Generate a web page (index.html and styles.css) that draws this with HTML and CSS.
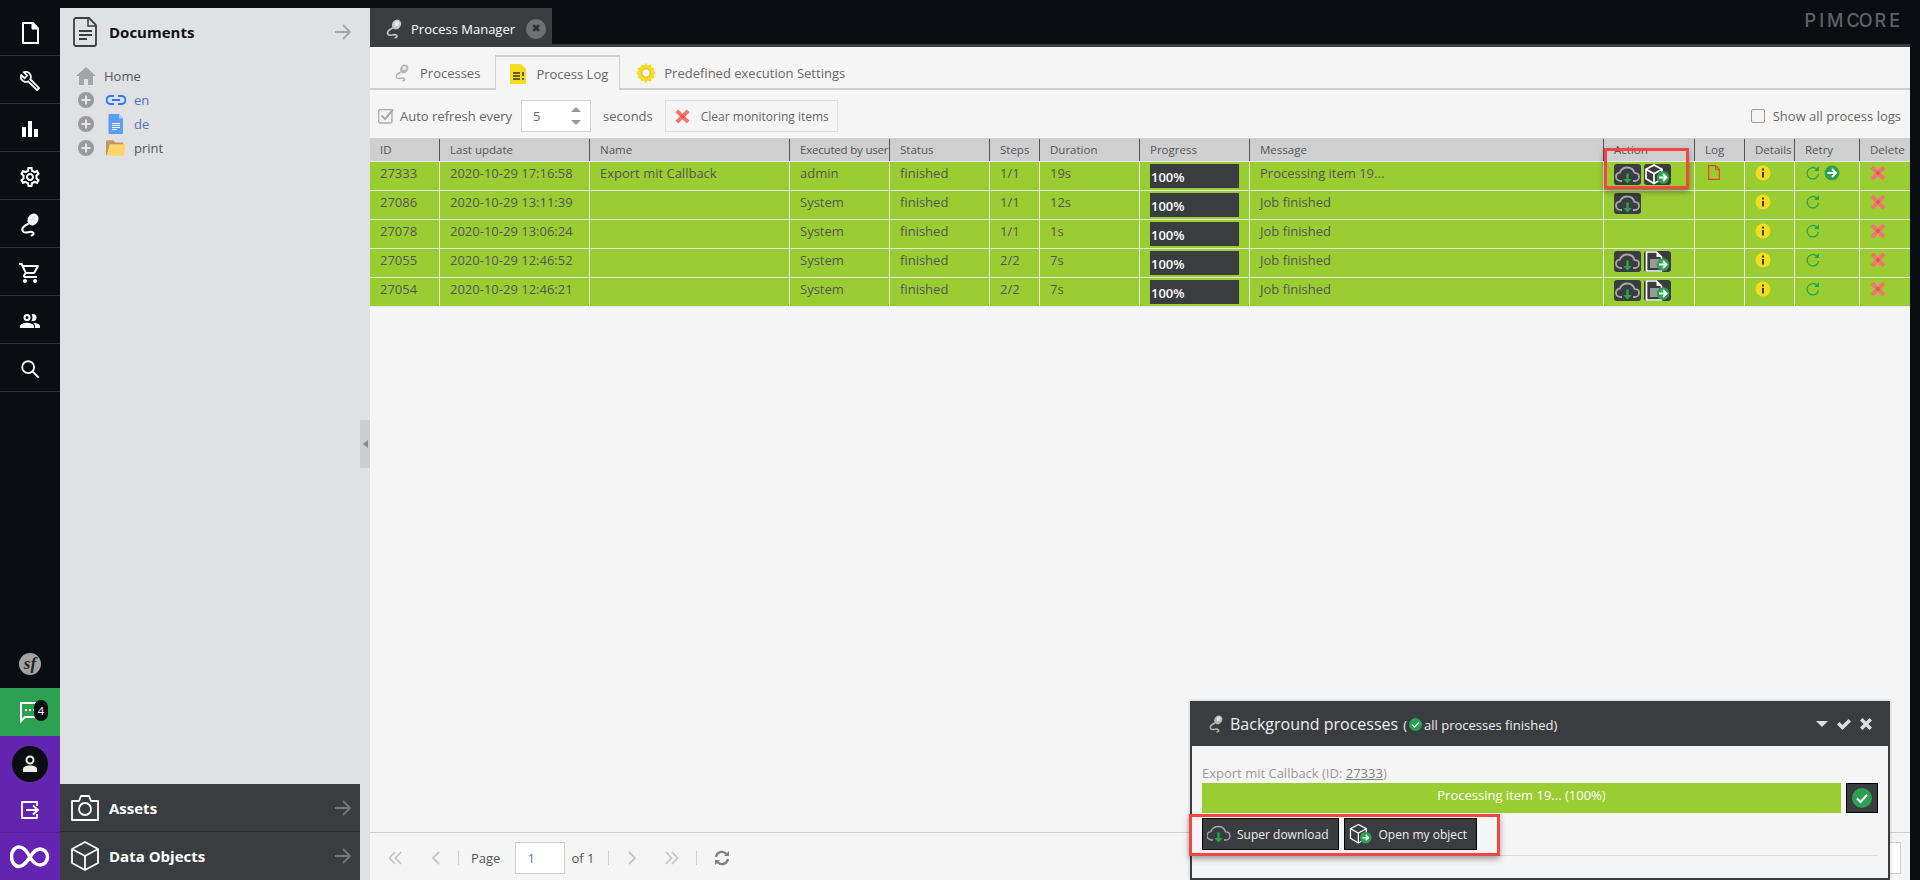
FILE: index.html
```html
<!DOCTYPE html>
<html lang="en">
<head>
    <meta charset="UTF-8">
    <title>Process Manager - Pimcore</title>
    <link rel="stylesheet" href="styles.css">
</head>
<body>
    <!-- shared icons -->
    <svg class="defs" xmlns="http://www.w3.org/2000/svg">
        <symbol id="i-pm" viewBox="0 0 24 24">
            <path d="M10 11C5.500 13 3 15.500 5 18.500c2 2.500 6.500-.5 9 .5 2.500 1 2 3-.5 3.500" fill="none" stroke="currentColor" stroke-width="2" stroke-linecap="round"/>
            <ellipse cx="15" cy="6.500" rx="5.200" ry="6.200" transform="rotate(35 15 6.500)" fill="currentColor"/>
            <ellipse cx="15.500" cy="5.500" rx="2.500" ry="3" transform="rotate(35 15.500 5.500)" fill="#d8eef9"/>
        </symbol>
        <symbol id="i-arrow" viewBox="0 0 16 16">
            <path d="M0 8h15M8 1l7 7-7 7" fill="none" stroke="currentColor" stroke-width="1.800"/>
        </symbol>
        <symbol id="i-plus" viewBox="0 0 16 16">
            <circle cx="8" cy="8" r="8" fill="#999"/>
            <path d="M8 3.500v9M3.500 8h9" stroke="#e8e8e8" stroke-width="2"/>
        </symbol>
        <symbol id="i-cloud" viewBox="0 0 27 21">
            <rect width="27" height="21" rx="3" fill="#3a3d40"/>
            <path d="M8 17H7c-2.800 0-5-1.800-5-4.300 0-2.200 1.700-3.800 3.900-4.100C7 5.500 10 3.500 13.200 3.500c3.800 0 6.500 2.400 7.300 5.400 2.600.1 4.500 1.700 4.500 4 0 2.300-1.900 4.100-4.300 4.100H19" fill="none" stroke="#a9a9a9" stroke-width="1.800"/>
            <path d="M12.300 9.500h2.400V15h3l-4.200 4.500L9.300 15h3z" fill="#2ca152"/>
        </symbol>
        <symbol id="i-cube-go" viewBox="0 0 27 21">
            <rect width="27" height="21" rx="3" fill="#3a3d40"/>
            <path d="M10 1l8 4.300v9.400L10 19.500l-8-4.800V5.300zM2 5.300l8 4.400 8-4.400M10 9.700v9.800" fill="none" stroke="#fff" stroke-width="1.700"/>
            <circle cx="19" cy="13.500" r="6.300" fill="#2ca152"/>
            <path d="M15 13.500h7M19 10l3.500 3.500-3.500 3.500" fill="none" stroke="#fff" stroke-width="1.800"/>
        </symbol>
        <symbol id="i-doc-go" viewBox="0 0 27 21">
            <rect width="27" height="21" rx="3" fill="#3a3d40"/>
            <path d="M2.500 1h10l5 5v14h-15z" fill="none" stroke="#fff" stroke-width="1.700"/>
            <path d="M12.500 1v5h5" fill="#fff"/>
            <rect x="6" y="8" width="9" height="9" fill="#999"/>
            <circle cx="19" cy="13.500" r="6.300" fill="#2ca152"/>
            <path d="M15 13.500h7M19 10l3.500 3.500-3.500 3.500" fill="none" stroke="#fff" stroke-width="1.800"/>
        </symbol>
        <symbol id="i-info" viewBox="0 0 16 16">
            <circle cx="8" cy="8" r="7.500" fill="#f5dc1e"/>
            <path d="M8 3.500v2M8 7v5.500" stroke="#3a3d40" stroke-width="2"/>
        </symbol>
        <symbol id="i-retry" viewBox="0 0 16 16">
            <path d="M13.500 9a5.700 5.700 0 1 1-1.800-5" fill="none" stroke="#2ca152" stroke-width="1.300"/>
            <path d="M14 1v5H9z" fill="#2ca152"/>
        </symbol>
        <symbol id="i-go" viewBox="0 0 16 16">
            <circle cx="8" cy="8" r="7.500" fill="#2ca152"/>
            <path d="M3.500 8h8.500M8 4l4 4-4 4" fill="none" stroke="#fff" stroke-width="1.800"/>
        </symbol>
        <symbol id="i-delete" viewBox="0 0 16 16">
            <path d="M.5 3.500L3.500.5 8 5l4.500-4.500 3 3L11 8l4.500 4.500-3 3L8 11l-4.500 4.500-3-3L5 8z" fill="#f57373"/>
            <circle cx="8" cy="8" r="2" fill="#e4574a"/>
        </symbol>
        <symbol id="i-check-round" viewBox="0 0 20 20">
            <circle cx="10" cy="10" r="10" fill="#2ca152"/>
            <path d="M5 10.500l3.500 3.500L15 7" fill="none" stroke="#fff" stroke-width="2"/>
        </symbol>
    </svg>

    <nav class="rail">
        <a class="rail-item">
            <svg class="rail-icon" viewBox="0 0 24 24"><path d="M5 2h10l5 5.500V22H5z" fill="none" stroke="#fff" stroke-width="2" stroke-linejoin="round"/><path d="M14 2v6h6" fill="#fff" stroke="#fff"/></svg>
        </a>
        <a class="rail-item">
            <svg class="rail-icon rail-icon-sm" viewBox="0 0 24 24"><path fill="#fff" d="M22.610 18.990l-9.080-9.080c.93-2.340.45-5.100-1.440-7C9.790.61 6.210.4 3.660 2.260L7.500 6.110 6.080 7.520 2.250 3.690C.39 6.230.6 9.820 2.900 12.110c1.860 1.860 4.570 2.360 6.890 1.480l9.110 9.110c.39.39 1.020.39 1.410 0l2.300-2.300c.4-.38.4-1.010 0-1.410zm-3 1.600l-9.460-9.460c-.61.45-1.290.72-2 .82-1.360.2-2.790-.21-3.830-1.250C3.370 9.760 2.930 8.500 3 7.260l3.090 3.090 4.240-4.240-3.090-3.090c1.240-.07 2.490.37 3.440 1.310 1.080 1.080 1.490 2.570 1.240 3.960-.12.71-.42 1.370-.88 1.960l9.450 9.450-.88.89z"/></svg>
        </a>
        <a class="rail-item">
            <svg class="rail-icon" viewBox="0 0 24 24"><path fill="#fff" d="M4 10h4v10H4zM10 4h4v16h-4zM16 12h4v8h-4z"/></svg>
        </a>
        <a class="rail-item">
            <svg class="rail-icon" viewBox="0 0 24 24"><path fill="#fff" d="M19.430 12.980c.04-.32.07-.64.07-.98 0-.34-.03-.66-.07-.98l2.110-1.650c.19-.15.24-.42.12-.64l-2-3.460c-.09-.16-.26-.25-.44-.25-.06 0-.12.01-.17.03l-2.490 1c-.52-.4-1.080-.73-1.690-.98l-.38-2.650C14.460 2.180 14.250 2 14 2h-4c-.25 0-.46.18-.49.42l-.38 2.650c-.61.25-1.170.59-1.690.98l-2.490-1c-.06-.02-.12-.03-.18-.03-.17 0-.34.09-.43.25l-2 3.460c-.13.22-.07.49.12.64l2.110 1.650c-.04.32-.07.65-.07.98 0 .33.03.66.07.98l-2.110 1.650c-.19.15-.24.42-.12.64l2 3.460c.09.16.26.25.44.25.06 0 .12-.01.17-.03l2.490-1c.52.4 1.080.73 1.690.98l.38 2.650c.03.24.24.42.49.42h4c.25 0 .46-.18.49-.42l.38-2.650c.61-.25 1.170-.59 1.690-.98l2.490 1c.06.02.12.03.18.03.17 0 .34-.09.43-.25l2-3.460c.12-.22.07-.49-.12-.64l-2.110-1.650zm-1.980-1.710c.04.31.05.52.05.73 0 .21-.02.43-.05.73l-.14 1.130.89.7 1.080.84-.7 1.210-1.270-.51-1.040-.42-.9.68c-.43.32-.84.56-1.250.73l-1.060.43-.16 1.130-.2 1.350h-1.400l-.19-1.350-.16-1.130-1.060-.43c-.43-.18-.83-.41-1.230-.71l-.91-.7-1.060.43-1.270.51-.7-1.210 1.080-.84.89-.7-.14-1.130c-.03-.31-.05-.54-.05-.74s.02-.43.05-.73l.14-1.130-.89-.7-1.080-.84.7-1.210 1.270.51 1.040.42.9-.68c.43-.32.84-.56 1.250-.73l1.060-.43.16-1.130.2-1.350h1.390l.19 1.350.16 1.130 1.060.43c.43.18.83.41 1.230.71l.91.7 1.060-.43 1.270-.51.7 1.210-1.070.85-.89.7.14 1.130zM12 8c-2.210 0-4 1.790-4 4s1.790 4 4 4 4-1.790 4-4-1.790-4-4-4zm0 6c-1.100 0-2-.9-2-2s.9-2 2-2 2 .9 2 2-.9 2-2 2z"/></svg>
        </a>
        <a class="rail-item rail-pm">
            <svg class="rail-icon"><use href="#i-pm"/></svg>
        </a>
        <a class="rail-item">
            <svg class="rail-icon" viewBox="0 0 24 24"><path fill="#fff" d="M15.550 13c.75 0 1.410-.41 1.750-1.030l3.580-6.490c.37-.66-.11-1.480-.87-1.480H5.210l-.94-2H1v2h2l3.600 7.590-1.350 2.440C4.520 15.370 5.480 17 7 17h12v-2H7l1.100-2h7.450zM6.160 6h12.150l-2.760 5H8.530L6.160 6zM7 18c-1.100 0-1.990.9-1.990 2S5.900 22 7 22s2-.9 2-2-.9-2-2-2zm10 0c-1.100 0-1.990.9-1.990 2s.89 2 1.990 2 2-.9 2-2-.9-2-2-2z"/></svg>
        </a>
        <a class="rail-item">
            <svg class="rail-icon" viewBox="0 0 24 24"><path fill="#fff" d="M9 12a3.500 3.500 0 1 0 0-7 3.500 3.500 0 0 0 0 7zm0-5a1.500 1.500 0 1 1 0 3 1.500 1.500 0 0 1 0-3zM9 13.750c-2.340 0-7 1.170-7 3.500V19h14v-1.750c0-2.330-4.660-3.500-7-3.500zM15.040 13.810c1.160.84 1.960 1.960 1.960 3.440V19h5v-1.750c0-2.020-3.500-3.170-6.960-3.440zM15 12a3.500 3.500 0 0 0 0-7c-.54 0-1.040.13-1.500.35.63.89 1 1.980 1 3.150s-.37 2.260-1 3.150c.46.22.96.35 1.500.35z"/></svg>
        </a>
        <a class="rail-item">
            <svg class="rail-icon rail-icon-sm" viewBox="0 0 24 24"><circle cx="10" cy="10" r="6.500" fill="none" stroke="#fff" stroke-width="2"/><path d="M15 15l6.500 6.500" stroke="#fff" stroke-width="2"/></svg>
        </a>

        <div class="rail-bottom">
            <a class="rail-tool"><span class="sf-logo">sf</span></a>
            <a class="rail-tool rail-notes">
                <svg class="rail-icon" viewBox="0 0 24 24"><path d="M3 3h18v14H7l-4 4z" fill="none" stroke="#fff" stroke-width="2"/><path d="M7 9h2v2H7zM11 9h2v2h-2zM15 9h2v2h-2z" fill="#fff"/></svg>
                <span class="badge">4</span>
            </a>
            <div class="rail-user">
                <span class="avatar">
                    <svg class="avatar-icon" viewBox="0 0 24 24"><circle cx="12" cy="8" r="3.500" fill="none" stroke="#eee" stroke-width="2"/><path d="M5 20v-3c0-2 3-3.500 7-3.500s7 1.500 7 3.500v3z" fill="#eee"/></svg>
                </span>
                <svg class="logout-icon" viewBox="0 0 20 20"><path d="M17 6V2H2v16h15v-4" fill="none" stroke="#fff" stroke-width="1.800" stroke-linejoin="round"/><path d="M6 10h12M13 5.500l5 4.500-5 4.500" fill="none" stroke="#fff" stroke-width="1.800"/></svg>
                <span class="rail-logo">
                    <svg class="infinity" viewBox="0 0 40 24"><path d="M20 12C17 6 13 2 9 2 4.500 2 1.500 6.500 1.500 11.500S4.500 21.500 9 21.500c4.500 0 7.500-4.500 11-9.500 3-4.500 5.500-8 10-8 4 0 7.500 3.500 7.500 8s-3.500 8-7.500 8c-4.500 0-7.500-3.500-10-8z" fill="none" stroke="#fff" stroke-width="3.500"/></svg>
                </span>
            </div>
        </div>
    </nav>

    <div class="tree-wrap">
        <aside class="side">
            <div class="side-head">
                <svg class="side-doc" viewBox="0 0 24 30"><path d="M3 1h13l7 7v19a2 2 0 0 1-2 2H3a2 2 0 0 1-2-2V3a2 2 0 0 1 2-2z" fill="none" stroke="#3a3d40" stroke-width="1.800"/><path d="M15 1v8h8" fill="none" stroke="#3a3d40" stroke-width="1.500"/><path d="M6 14h13M6 18h13M6 22h8" stroke="#3a3d40" stroke-width="1.800"/></svg>
                <span class="side-title">Documents</span>
                <svg class="side-arrow"><use href="#i-arrow"/></svg>
            </div>
            <ul class="tree">
                <li class="tree-row">
                    <svg class="tree-home" viewBox="0 0 20 18"><path d="M10 0l10 9h-3v9h-5v-6H8v6H3V9H0z" fill="#a5a5a5"/></svg>
                    <span class="tree-text">Home</span>
                </li>
                <li class="tree-row">
                    <svg class="tree-plus"><use href="#i-plus"/></svg>
                    <svg class="tree-type" viewBox="0 0 20 20"><path d="M8 6H4.500a4 4 0 0 0 0 8H8M12 6h3.500a4 4 0 0 1 0 8H12M6 10h8" fill="none" stroke="#2979ff" stroke-width="2"/></svg>
                    <span class="tree-text tree-link">en</span>
                </li>
                <li class="tree-row">
                    <svg class="tree-plus"><use href="#i-plus"/></svg>
                    <svg class="tree-type" viewBox="0 0 20 20"><path d="M3.500 0H13l4 4.500V19a1 1 0 0 1-1 1H3.500a1 1 0 0 1-1-1V1a1 1 0 0 1 1-1z" fill="#5c9cf5"/><path d="M13 0v4.500h4z" fill="#a9c9f9"/><path d="M6 9.500h8M6 11.500h8M6 13.500h8M6 15.500h5" stroke="#fff"/></svg>
                    <span class="tree-text tree-link">de</span>
                </li>
                <li class="tree-row">
                    <svg class="tree-plus"><use href="#i-plus"/></svg>
                    <svg class="tree-type" viewBox="0 0 22 18"><path d="M0 1.500a1 1 0 0 1 1-1h7l2.500 2.500H19v3H4L1 17H0z" fill="#bf9a63"/><path d="M4 5h16.500a1 1 0 0 1 1 1.200L20 16.500a1 1 0 0 1-1 1H1.500z" fill="#ffd56b"/></svg>
                    <span class="tree-text">print</span>
                </li>
            </ul>
            <div class="acc-item">
                <svg class="acc-icon" viewBox="0 0 28 26"><path d="M1 6h7l2-5h8l2 5h7v19H1z" fill="none" stroke="#fff" stroke-width="1.800" stroke-linejoin="round"/><circle cx="14" cy="14" r="6" fill="none" stroke="#fff" stroke-width="1.800"/></svg>
                <span class="acc-title">Assets</span>
                <svg class="acc-arrow"><use href="#i-arrow"/></svg>
            </div>
            <div class="acc-item">
                <svg class="acc-icon acc-cube" viewBox="0 0 28 30"><path d="M14 1l13 7v14l-13 7-13-7V8zM1 8l13 7 13-7M14 15v14" fill="none" stroke="#fff" stroke-width="1.800" stroke-linejoin="round"/></svg>
                <span class="acc-title">Data Objects</span>
                <svg class="acc-arrow"><use href="#i-arrow"/></svg>
            </div>
        </aside>
        <div class="splitter">
            <div class="collapser"><span class="collapse-arrow"></span></div>
        </div>
    </div>

    <main class="main">
        <header class="tabbar">
            <div class="main-tab">
                <svg class="main-tab-icon"><use href="#i-pm"/></svg>
                <span>Process Manager</span>
                <span class="tab-close">&#10006;</span>
            </div>
            <div class="brand">PIM<span class="brand-loop">CO</span>RE</div>
        </header>

        <section class="content">
            <div class="subtabs">
                <div class="subtab subtab-first">
                    <svg class="subtab-icon subtab-pm"><use href="#i-pm"/></svg>
                    <span>Processes</span>
                </div>
                <div class="subtab subtab-active">
                    <svg class="subtab-icon" viewBox="0 0 16 20"><path d="M1 0h10l5 5v14a1 1 0 0 1-1 1H1a1 1 0 0 1-1-1V1a1 1 0 0 1 1-1z" fill="#f5dc1e"/><path d="M3 9h7M3 12h7M3 15h7M13 8v4M13 14v2" stroke="#333" stroke-width="1.500"/></svg>
                    <span>Process Log</span>
                </div>
                <div class="subtab subtab-last">
                    <svg class="subtab-gear" viewBox="0 0 20 20"><path d="M10 0l2 2.500 3-1 .5 3 3 .5-1 3L20 10l-2.500 2 1 3-3 .5-.5 3-3-1-2 2.500-2-2.500-3 1-.5-3-3-.5 1-3L0 10l2.500-2-1-3 3-.5.5-3 3 1z" fill="#f5dc1e"/><circle cx="10" cy="10" r="4.200" fill="#f5f5f5" stroke="#d9bb1a"/></svg>
                    <span>Predefined execution Settings</span>
                </div>
            </div>

            <div class="toolbar">
                <svg class="check-icon" viewBox="0 0 16 16"><rect x=".7" y="1.700" width="13.300" height="13.300" rx="1.500" fill="#f5f5f5" stroke="#a9a9a9" stroke-width="1.300"/><path d="M3.500 7.500L7 11l8-9.500" fill="none" stroke="#a9a9a9" stroke-width="2"/></svg>
                <span class="tool-label">Auto refresh every</span>
                <div class="spinner">
                    <span>5</span>
                    <span class="spin-btns"><i class="spin-up"></i><i class="spin-down"></i></span>
                </div>
                <span class="tool-seconds">seconds</span>
                <div class="tool-button">
                    <svg class="tool-x"><use href="#i-delete"/></svg>
                    <span>Clear monitoring items</span>
                </div>
                <span class="show-all">
                    <span class="checkbox"></span>
                    <span>Show all process logs</span>
                </span>
            </div>

            <div class="grid">
                <div class="grid-row grid-head">
                    <div class="cell">ID</div>
                    <div class="cell">Last update</div>
                    <div class="cell">Name</div>
                    <div class="cell cell-tight">Executed by user</div>
                    <div class="cell">Status</div>
                    <div class="cell">Steps</div>
                    <div class="cell">Duration</div>
                    <div class="cell">Progress</div>
                    <div class="cell">Message</div>
                    <div class="cell">Action</div>
                    <div class="cell">Log</div>
                    <div class="cell">Details</div>
                    <div class="cell">Retry</div>
                    <div class="cell">Delete</div>
                </div>

                <div class="grid-row">
                    <div class="cell">27333</div>
                    <div class="cell">2020-10-29 17:16:58</div>
                    <div class="cell">Export mit Callback</div>
                    <div class="cell">admin</div>
                    <div class="cell">finished</div>
                    <div class="cell">1/1</div>
                    <div class="cell">19s</div>
                    <div class="cell"><div class="bar">100%</div></div>
                    <div class="cell">Processing item 19...</div>
                    <div class="cell cell-actions">
                        <svg class="act"><use href="#i-cloud"/></svg>
                        <svg class="act"><use href="#i-cube-go"/></svg>
                        <span class="marker marker-grid"></span>
                    </div>
                    <div class="cell cell-icon"><svg class="log-icon" viewBox="0 0 12 15"><path d="M.7.700h7l3.600 3.600v10H.7z" fill="none" stroke="#f0402a" stroke-width="1.200"/><path d="M7.500.700v4h3.800" fill="none" stroke="#f0402a"/></svg></div>
                    <div class="cell cell-icon"><svg class="ico"><use href="#i-info"/></svg></div>
                    <div class="cell cell-icon"><svg class="ico"><use href="#i-retry"/></svg><svg class="ico ico-next"><use href="#i-go"/></svg></div>
                    <div class="cell cell-icon"><svg class="ico"><use href="#i-delete"/></svg></div>
                </div>

                <div class="grid-row">
                    <div class="cell">27086</div>
                    <div class="cell">2020-10-29 13:11:39</div>
                    <div class="cell"></div>
                    <div class="cell">System</div>
                    <div class="cell">finished</div>
                    <div class="cell">1/1</div>
                    <div class="cell">12s</div>
                    <div class="cell"><div class="bar">100%</div></div>
                    <div class="cell">Job finished</div>
                    <div class="cell cell-actions"><svg class="act"><use href="#i-cloud"/></svg></div>
                    <div class="cell"></div>
                    <div class="cell cell-icon"><svg class="ico"><use href="#i-info"/></svg></div>
                    <div class="cell cell-icon"><svg class="ico"><use href="#i-retry"/></svg></div>
                    <div class="cell cell-icon"><svg class="ico"><use href="#i-delete"/></svg></div>
                </div>

                <div class="grid-row">
                    <div class="cell">27078</div>
                    <div class="cell">2020-10-29 13:06:24</div>
                    <div class="cell"></div>
                    <div class="cell">System</div>
                    <div class="cell">finished</div>
                    <div class="cell">1/1</div>
                    <div class="cell">1s</div>
                    <div class="cell"><div class="bar">100%</div></div>
                    <div class="cell">Job finished</div>
                    <div class="cell cell-actions"></div>
                    <div class="cell"></div>
                    <div class="cell cell-icon"><svg class="ico"><use href="#i-info"/></svg></div>
                    <div class="cell cell-icon"><svg class="ico"><use href="#i-retry"/></svg></div>
                    <div class="cell cell-icon"><svg class="ico"><use href="#i-delete"/></svg></div>
                </div>

                <div class="grid-row">
                    <div class="cell">27055</div>
                    <div class="cell">2020-10-29 12:46:52</div>
                    <div class="cell"></div>
                    <div class="cell">System</div>
                    <div class="cell">finished</div>
                    <div class="cell">2/2</div>
                    <div class="cell">7s</div>
                    <div class="cell"><div class="bar">100%</div></div>
                    <div class="cell">Job finished</div>
                    <div class="cell cell-actions">
                        <svg class="act"><use href="#i-cloud"/></svg>
                        <svg class="act"><use href="#i-doc-go"/></svg>
                    </div>
                    <div class="cell"></div>
                    <div class="cell cell-icon"><svg class="ico"><use href="#i-info"/></svg></div>
                    <div class="cell cell-icon"><svg class="ico"><use href="#i-retry"/></svg></div>
                    <div class="cell cell-icon"><svg class="ico"><use href="#i-delete"/></svg></div>
                </div>

                <div class="grid-row">
                    <div class="cell">27054</div>
                    <div class="cell">2020-10-29 12:46:21</div>
                    <div class="cell"></div>
                    <div class="cell">System</div>
                    <div class="cell">finished</div>
                    <div class="cell">2/2</div>
                    <div class="cell">7s</div>
                    <div class="cell"><div class="bar">100%</div></div>
                    <div class="cell">Job finished</div>
                    <div class="cell cell-actions">
                        <svg class="act"><use href="#i-cloud"/></svg>
                        <svg class="act"><use href="#i-doc-go"/></svg>
                    </div>
                    <div class="cell"></div>
                    <div class="cell cell-icon"><svg class="ico"><use href="#i-info"/></svg></div>
                    <div class="cell cell-icon"><svg class="ico"><use href="#i-retry"/></svg></div>
                    <div class="cell cell-icon"><svg class="ico"><use href="#i-delete"/></svg></div>
                </div>
            </div>

            <div class="pager">
                <svg class="pg-icon" viewBox="0 0 14 14"><path d="M7 1L1.500 7 7 13M13 1L7.500 7l5.500 6" fill="none" stroke="#c4c4c4" stroke-width="1.800"/></svg>
                <svg class="pg-icon pg-prev" viewBox="0 0 14 14"><path d="M10 1L4 7l6 6" fill="none" stroke="#c4c4c4" stroke-width="1.800"/></svg>
                <span class="pg-sep"></span>
                <span class="pg-page">Page</span>
                <span class="pg-input">1</span>
                <span>of 1</span>
                <span class="pg-sep pg-sep-two"></span>
                <svg class="pg-icon pg-next" viewBox="0 0 14 14"><path d="M4 1l6 6-6 6" fill="none" stroke="#c4c4c4" stroke-width="1.800"/></svg>
                <svg class="pg-icon pg-last" viewBox="0 0 14 14"><path d="M1 1l5.500 6L1 13M7 1l5.500 6L7 13" fill="none" stroke="#c4c4c4" stroke-width="1.800"/></svg>
                <span class="pg-sep pg-sep-three"></span>
                <svg class="pg-icon pg-refresh" viewBox="0 0 16 16"><path d="M2 7a6 6 0 0 1 10.500-3M14 9a6 6 0 0 1-10.500 3" fill="none" stroke="#808080" stroke-width="2.200"/><path d="M15 1v5h-5zM1 15v-5h5z" fill="#808080"/></svg>
                <span class="pg-size"></span>
            </div>
        </section>

        <div class="bg-window">
            <div class="win-head">
                <svg class="win-pm"><use href="#i-pm"/></svg>
                <span class="win-title">Background processes</span>
                <span class="win-sub">(<svg class="win-ok"><use href="#i-check-round"/></svg>all processes finished)</span>
                <span class="win-tools">
                    <svg class="win-tool" viewBox="0 0 14 14"><path d="M1 4h12L7 10z" fill="#ddd"/></svg>
                    <svg class="win-tool" viewBox="0 0 14 14"><path d="M0 7.500L2.500 5 5.500 8 11.500 2 14 4.500 5.500 13z" fill="#ddd"/></svg>
                    <svg class="win-tool" viewBox="0 0 14 14"><path d="M1 3.500L3.500 1 7 4.500 10.500 1 13 3.500 9.500 7l3.500 3.500-2.500 2.500L7 9.500 3.500 13 1 10.500 4.500 7z" fill="#ddd"/></svg>
                </span>
            </div>
            <div class="win-body">
                <div class="win-label">Export mit Callback (ID: <span class="win-id">27333</span>)</div>
                <div class="win-progress">
                    <div class="win-bar">Processing item 19... (100%)</div>
                    <div class="win-done"><svg class="win-done-icon"><use href="#i-check-round"/></svg></div>
                </div>
                <div class="win-actions">
                    <div class="win-btn">
                        <svg class="win-btn-icon" viewBox="2 2 24 18"><path d="M8 17H7c-2.800 0-5-1.800-5-4.300 0-2.200 1.700-3.800 3.900-4.100C7 5.500 10 3.500 13.200 3.500c3.800 0 6.500 2.400 7.300 5.400 2.600.1 4.500 1.700 4.500 4 0 2.300-1.900 4.100-4.300 4.100H19" fill="none" stroke="#a9a9a9" stroke-width="1.400"/><path d="M12.300 9.500h2.400V15h3l-4.200 4.500L9.300 15h3z" fill="#2ca152"/></svg>
                        <span>Super download</span>
                    </div>
                    <div class="win-btn">
                        <svg class="win-btn-icon" viewBox="2 1 21 19"><path d="M10 1.500l7.500 4v9l-7.500 4.500-7.500-4.500v-9zM2.500 5.500l7.500 4 7.500-4M10 9.500V19" fill="none" stroke="#fff" stroke-width="1.200"/><circle cx="17" cy="14" r="5.500" fill="#2ca152"/><path d="M14 14h5.500M17 11.500l2.500 2.500-2.500 2.500" fill="none" stroke="#fff" stroke-width="1.400"/></svg>
                        <span>Open my object</span>
                    </div>
                    <span class="marker marker-win"></span>
                </div>
                <div class="win-line"></div>
            </div>
        </div>
    </main>
</body>
</html>
```

FILE: styles.css
```css
* {
    box-sizing: border-box;
}
html, body {
    height: 100%;
}
body {
    margin: 0;
    display: flex;
    overflow: hidden;
    background-color: #0a0e12;
    font-family: "Open Sans", "Liberation Sans", sans-serif;
    font-size: 13px;
    color: #555;
}
svg {
    display: block;
    flex: none;
}
.defs {
    width: 0;
    height: 0;
    position: absolute;
}

/* left rail */
.rail {
    width: 60px;
    flex: none;
    display: flex;
    flex-direction: column;
    padding-top: 8px;
}
.rail-item {
    height: 48px;
    padding-top: 2px;
    display: flex;
    justify-content: center;
    align-items: center;
    border-bottom: 1px solid #2f3337;
}
.rail-icon {
    width: 24px;
    height: 24px;
}
.rail-icon-sm {
    width: 22px;
    height: 22px;
}
.rail-pm {
    color: #fff;
}
.rail-bottom {
    margin-top: auto;
}
.rail-tool {
    height: 48px;
    display: flex;
    justify-content: center;
    align-items: center;
    position: relative;
}
.sf-logo {
    width: 22px;
    height: 22px;
    border-radius: 50%;
    background-color: #a3a3a3;
    color: #222;
    font-family: "Liberation Serif", serif;
    font-style: italic;
    font-weight: bold;
    font-size: 17px;
    line-height: 21px;
    text-align: center;
}
.rail-notes {
    background-color: #2ca152;
}
.badge {
    position: absolute;
    left: 34px;
    top: 12px;
    width: 14px;
    height: 21px;
    border-radius: 7px;
    background-color: #0a0e12;
    color: #fff;
    font-size: 11px;
    line-height: 21px;
    text-align: center;
}
.rail-user {
    height: 144px;
    background-color: #6325b0;
    display: flex;
    flex-direction: column;
    align-items: center;
    padding-top: 10px;
}
.avatar {
    width: 36px;
    height: 36px;
    border-radius: 50%;
    background-color: #0a0e12;
    display: flex;
    justify-content: center;
    align-items: center;
}
.avatar-icon {
    width: 24px;
    height: 24px;
}
.logout-icon {
    width: 20px;
    height: 20px;
    margin-top: 18px;
}
.rail-logo {
    width: 100%;
    height: 48px;
    margin-top: 12px;
    border-top: 1px solid #57209b;
    display: flex;
    justify-content: center;
    padding-top: 12px;
}
.infinity {
    width: 40px;
    height: 24px;
}

/* tree panel */
.tree-wrap {
    width: 310px;
    flex: none;
    margin-top: 8px;
    display: flex;
    background-color: #e0e1e3;
}
.side {
    width: 300px;
    display: flex;
    flex-direction: column;
}
.side-head {
    height: 56px;
    padding: 9px 0 0 13px;
    display: flex;
    align-items: flex-start;
}
.side-doc {
    width: 24px;
    height: 30px;
}
.side-title {
    margin-left: 12px;
    font-size: 15px;
    font-weight: 700;
    line-height: 30px;
    color: #111;
}
.side-arrow {
    width: 16px;
    height: 16px;
    margin: 7px 9px 0 auto;
    color: #a5a5a5;
}
.tree {
    flex: 1;
    list-style: none;
    margin: 0;
    padding: 0 0 0 16px;
}
.tree-row {
    height: 24px;
    display: flex;
    align-items: center;
}
.tree-home {
    width: 20px;
    height: 18px;
}
.tree-plus {
    width: 16px;
    height: 16px;
    margin: 0 12px 0 2px;
}
.tree-type {
    width: 20px;
    height: 20px;
}
.tree-text {
    margin-left: 8px;
    color: #555;
}
.tree-link {
    color: #4f74bd;
}
.acc-item {
    height: 48px;
    padding-left: 11px;
    display: flex;
    align-items: center;
    background-color: #3a3d40;
    border-bottom: 1px solid #2b2e31;
}
.acc-item:last-child {
    border-bottom: 0;
}
.acc-icon {
    width: 28px;
    height: 26px;
}
.acc-cube {
    height: 30px;
}
.acc-title {
    margin-left: 10px;
    font-size: 15px;
    font-weight: 700;
    color: #fff;
}
.acc-arrow {
    width: 16px;
    height: 16px;
    margin: 0 9px 0 auto;
    color: #777;
}
.splitter {
    width: 10px;
    display: flex;
    align-items: center;
}
.collapser {
    width: 10px;
    height: 48px;
    background-color: #cdcdcd;
    display: flex;
    justify-content: center;
    align-items: center;
}
.collapse-arrow {
    border: 4px solid transparent;
    border-left-width: 0;
    border-right: 5px solid #8a8a8a;
}

/* main area */
.main {
    width: 1540px;
    flex: none;
    display: flex;
    flex-direction: column;
    position: relative;
}
.tabbar {
    height: 47px;
    flex: none;
    border-bottom: 3px solid #3a3d40;
    display: flex;
    justify-content: space-between;
}
.main-tab {
    width: 182px;
    height: 44px;
    margin-top: 8px;
    padding: 0 6px 3px 14px;
    display: flex;
    align-items: center;
    background-color: #3a3d40;
    color: #fff;
}
.main-tab-icon {
    width: 20px;
    height: 22px;
    margin-right: 7px;
    color: #c8c8c8;
}
.tab-close {
    width: 20px;
    height: 20px;
    margin-left: auto;
    border-radius: 50%;
    background-color: #717171;
    color: #2b2e31;
    font-family: "DejaVu Sans", sans-serif;
    font-size: 11px;
    line-height: 20px;
    text-align: center;
}
.brand {
    margin: 8px 7px 0 0;
    font-family: Inter, "Open Sans", sans-serif;
    font-size: 18px;
    font-weight: 500;
    letter-spacing: 3px;
    line-height: 26px;
    color: #5f6367;
}
.brand-loop {
    letter-spacing: -1px;
    margin-right: 3px;
}
.content {
    flex: 1;
    display: flex;
    flex-direction: column;
    background-color: #f5f5f5;
}
.subtabs {
    height: 43px;
    flex: none;
    padding: 8px 0 0 12px;
    display: flex;
    border-bottom: 2px solid #cfcfcf;
}
.subtab {
    height: 35px;
    display: flex;
    align-items: center;
    color: #666;
}
.subtab-first {
    padding: 0 15px 0 11px;
}
.subtab-active {
    height: 35px;
    padding: 0 11px 0 14px;
    border: 2px solid #cfcfcf;
    border-width: 2px 1px 0;
    background-color: #f5f5f5;
}
.subtab-last {
    padding-left: 16px;
}
.subtab-icon {
    width: 16px;
    height: 20px;
    margin-right: 10px;
}
.subtab-pm {
    width: 18px;
    margin-right: 9px;
    color: #b5b5b5;
}
.subtab-gear {
    width: 20px;
    height: 20px;
    margin-right: 8px;
}

.toolbar {
    height: 48px;
    flex: none;
    padding: 4px 9px 0 8px;
    display: flex;
    align-items: center;
    color: #666;
}
.check-icon {
    width: 16px;
    height: 16px;
}
.tool-label {
    margin-left: 6px;
}
.spinner {
    width: 70px;
    height: 32px;
    margin-left: 9px;
    padding: 0 9px 0 11px;
    display: flex;
    justify-content: space-between;
    align-items: center;
    background-color: #fff;
    border: 1px solid #d6d6d6;
}
.spin-btns {
    display: flex;
    flex-direction: column;
    gap: 8px;
}
.spin-up, .spin-down {
    display: block;
    border: 5px solid transparent;
    border-top-width: 0;
    border-bottom: 5px solid #999;
}
.spin-down {
    border-bottom-width: 0;
    border-top: 5px solid #999;
    border-bottom-color: transparent;
}
.tool-seconds {
    margin-left: 12px;
}
.tool-button {
    width: 173px;
    height: 32px;
    margin-left: 12px;
    padding-left: 9px;
    display: flex;
    align-items: center;
    border: 1px solid #e0e0e0;
    font-size: 12px;
    white-space: nowrap;
}
.tool-x {
    width: 15px;
    height: 15px;
    margin-right: 11px;
}
.show-all {
    margin-left: auto;
    display: flex;
    align-items: center;
}
.checkbox {
    width: 14px;
    height: 14px;
    margin-right: 8px;
    background-color: #f5f5f5;
    border: 1px solid #9a9a9a;
    border-radius: 2px;
}

/* process log grid */
.grid {
    flex: 1;
}
.grid-row {
    height: 29px;
    display: grid;
    grid-template-columns: 69px 150px 200px 100px 100px 50px 100px 110px 354px 91px 50px 50px 65px 51px;
    background-color: #9acd32;
    border-bottom: 1px solid #e8e8e8;
}
.grid-head {
    height: 24px;
    background-color: #cfcfcf;
    font-size: 11.5px;
}
.cell {
    padding-left: 10px;
    border-left: 1px solid #e8e8e8;
    line-height: 23px;
    white-space: nowrap;
    overflow: hidden;
}
.cell:first-child {
    border-left: 0;
}
.grid-head .cell {
    border-left-color: #555;
    margin-top: 1px;
    line-height: 22px;
}
.grid-head .cell-tight {
    letter-spacing: -0.2px;
}
.bar {
    width: 89px;
    height: 24px;
    margin-top: 2px;
    padding-left: 1px;
    background-color: #3a3d40;
    color: #fff;
    font-weight: 600;
    line-height: 26px;
}
.cell-actions {
    padding-top: 2px;
    display: flex;
    align-items: flex-start;
    gap: 3px;
    overflow: visible;
    position: relative;
}
.act {
    width: 27px;
    height: 21px;
}
.cell-icon {
    padding-top: 3px;
    display: flex;
    align-items: flex-start;
}
.ico {
    width: 16px;
    height: 16px;
}
.ico-next {
    margin-left: 3px;
}
.log-icon {
    width: 12px;
    height: 15px;
    margin-left: 3px;
}

/* red highlights from the screenshot */
.marker {
    position: absolute;
    border: 3px solid #f44545;
    box-shadow: 0 3px 6px rgba(0, 0, 0, 0.35);
}
.marker-grid {
    left: 0;
    top: -14px;
    width: 85px;
    height: 41px;
    z-index: 2;
}
.marker-win {
    left: -13px;
    top: -4px;
    width: 311px;
    height: 42px;
}

/* pager */
.pager {
    height: 48px;
    flex: none;
    padding: 2px 0 0 18px;
    display: flex;
    align-items: center;
    border-top: 1px solid #cfcfcf;
}
.pg-icon {
    width: 14px;
    height: 14px;
}
.pg-prev {
    margin-left: 27px;
}
.pg-sep {
    width: 1px;
    height: 14px;
    margin-left: 15px;
    background-color: #cfcfcf;
}
.pg-page {
    margin-left: 12px;
}
.pg-input {
    width: 50px;
    height: 32px;
    margin: 0 6px 0 15px;
    padding-left: 11px;
    line-height: 30px;
    background-color: #fff;
    border: 1px solid #cfcfcf;
    color: #4f74bd;
}
.pg-sep-two {
    margin-left: 14px;
}
.pg-next {
    margin-left: 16px;
}
.pg-last {
    margin-left: 26px;
}
.pg-sep-three {
    margin-left: 17px;
}
.pg-refresh {
    width: 16px;
    height: 16px;
    margin-left: 17px;
}
.pg-size {
    width: 100px;
    height: 32px;
    margin: 0 9px 0 auto;
    background-color: #fff;
    border: 1px solid #cfcfcf;
}

/* background processes window */
.bg-window {
    position: absolute;
    right: 20px;
    bottom: 0;
    width: 700px;
    height: 179px;
    background-color: #f5f5f5;
    border: 2px solid #3a3d40;
    border-top: 0;
    box-shadow: 0 0 4px rgba(0, 0, 0, 0.2);
}
.win-head {
    height: 45px;
    margin: 0 -1px;
    padding: 0 16px 0 16px;
    display: flex;
    align-items: center;
    background-color: #3a3d40;
    color: #eee;
}
.win-pm {
    width: 18px;
    height: 20px;
    margin-right: 5px;
    color: #b5b5b5;
}
.win-title {
    font-size: 16px;
}
.win-sub {
    margin-left: 5px;
    display: flex;
    align-items: center;
    padding-top: 2px;
}
.win-ok {
    width: 13px;
    height: 13px;
    margin: 0 2px;
}
.win-tools {
    margin-left: auto;
    display: flex;
    gap: 8px;
}
.win-tool {
    width: 14px;
    height: 14px;
}
.win-body {
    padding: 18px 10px 0;
}
.win-label {
    height: 19px;
    line-height: 18px;
    color: #999;
}
.win-id {
    color: #808080;
    text-decoration: underline;
}
.win-progress {
    height: 30px;
    display: flex;
    justify-content: space-between;
}
.win-bar {
    width: 639px;
    background-color: #9acd32;
    color: #fff;
    line-height: 25px;
    text-align: center;
}
.win-done {
    width: 32px;
    display: flex;
    justify-content: center;
    align-items: center;
    background-color: #3a3d40;
    border: 1px solid #000;
}
.win-done-icon {
    width: 20px;
    height: 20px;
}
.win-actions {
    margin-top: 5px;
    display: flex;
    gap: 5px;
    position: relative;
}
.win-btn {
    height: 32px;
    padding: 0 9px 0 4px;
    display: flex;
    align-items: center;
    gap: 6px;
    background-color: #3a3d40;
    border: 1px solid #000;
    color: #eee;
    font-size: 12px;
    white-space: nowrap;
}
.win-btn-icon {
    width: 24px;
    height: 20px;
}
.win-line {
    height: 1px;
    margin-top: 5px;
    background-color: #ddd;
}
```
